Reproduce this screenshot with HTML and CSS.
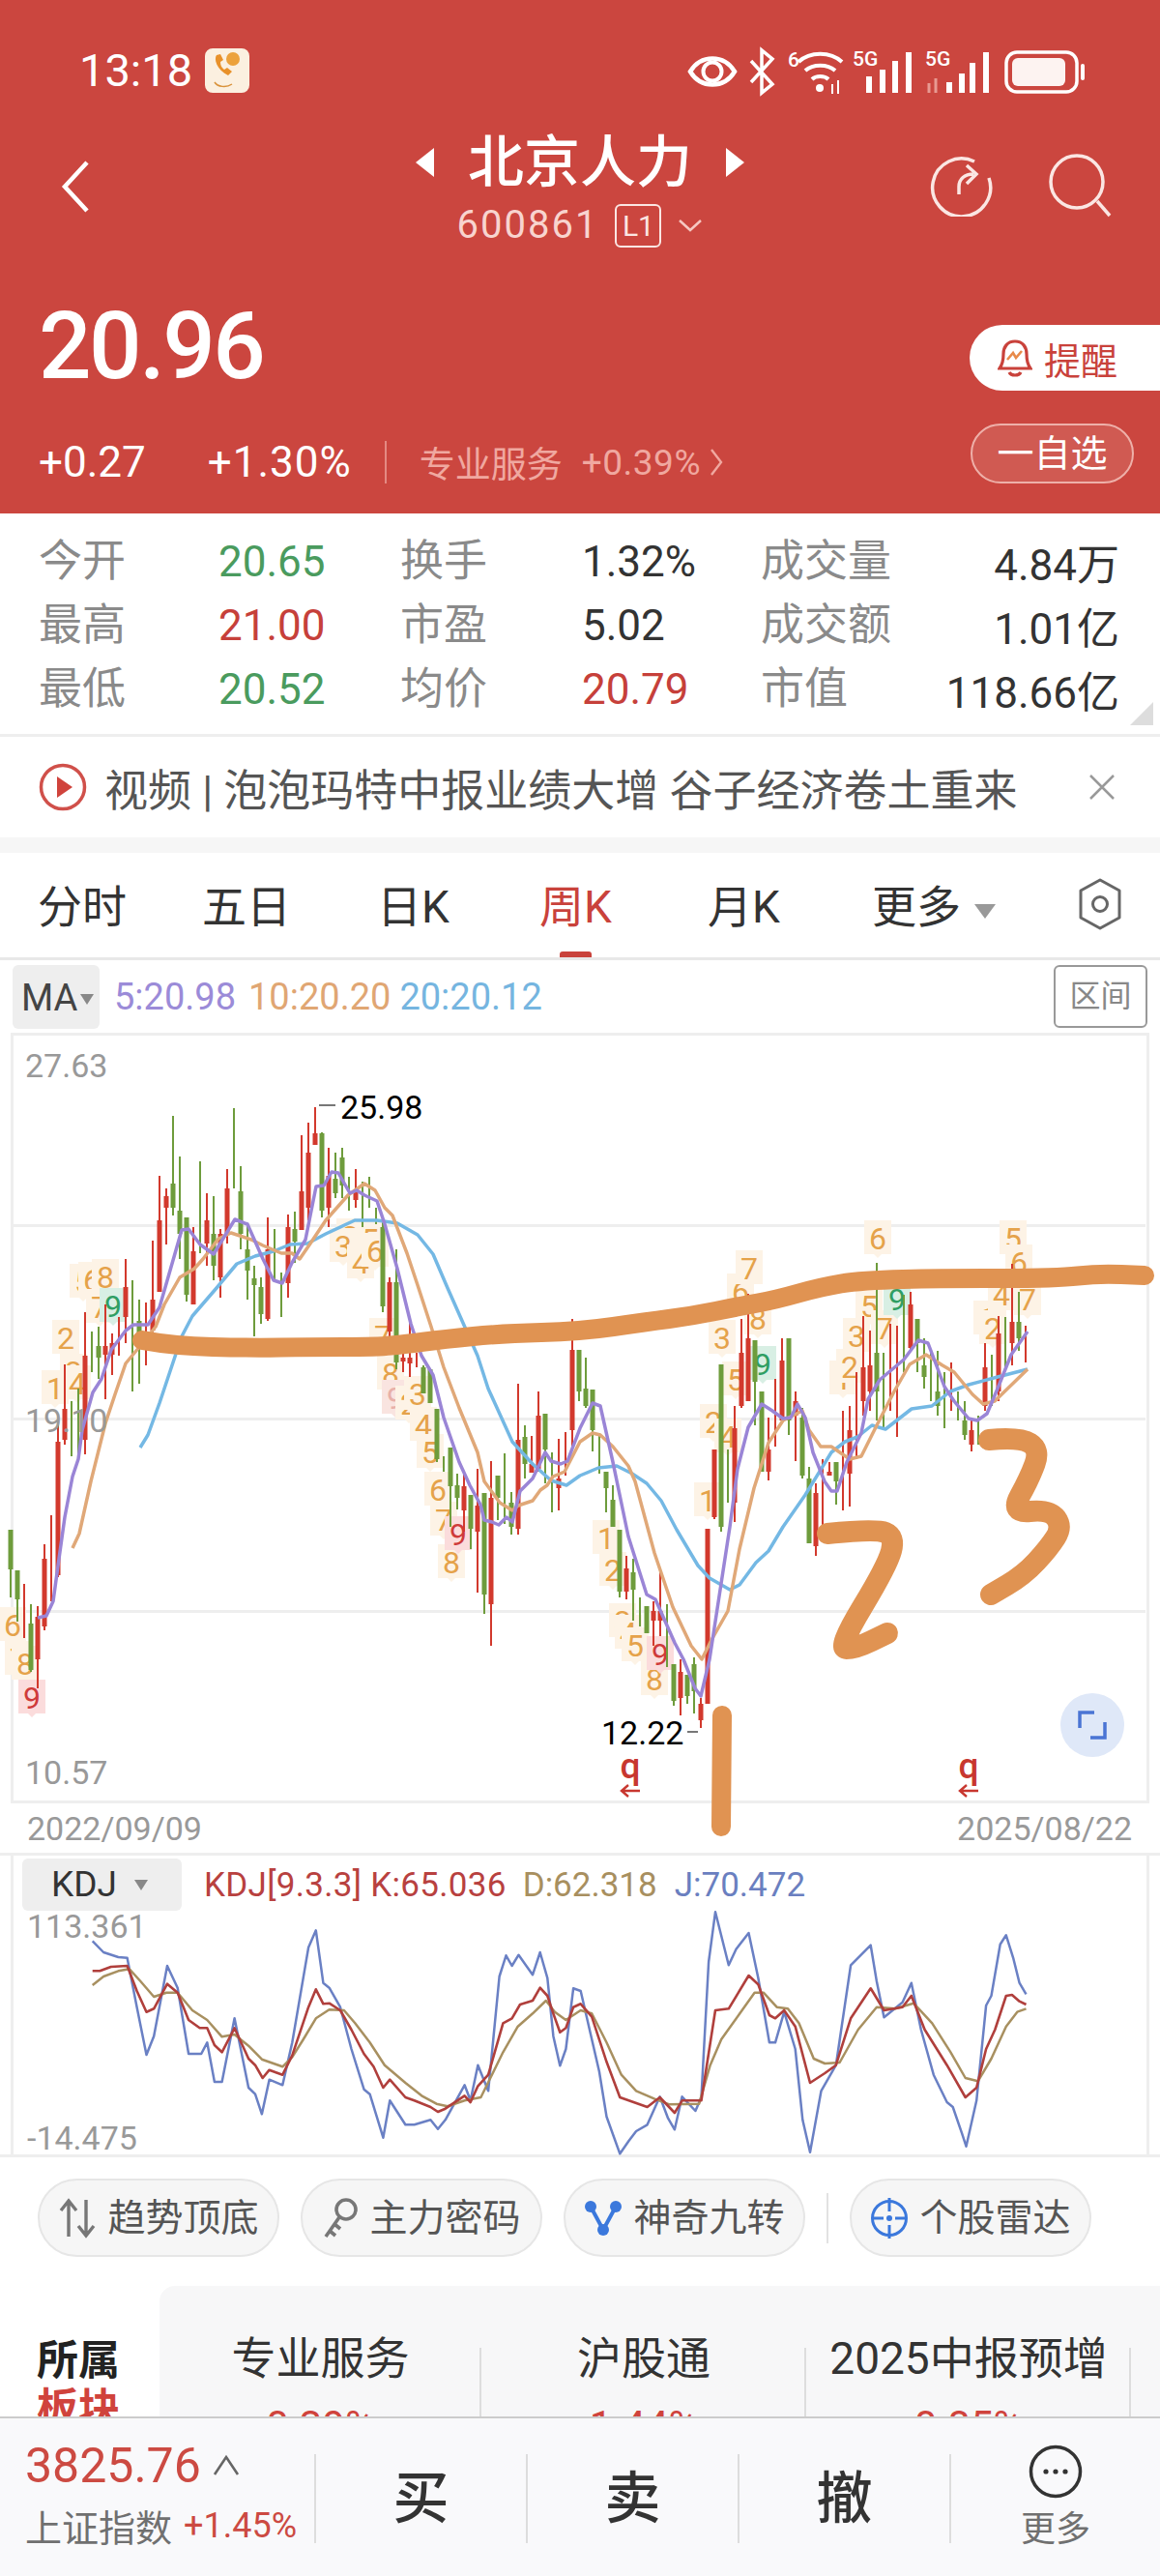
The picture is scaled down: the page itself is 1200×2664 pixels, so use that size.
FILE: index.html
```html
<!DOCTYPE html>
<html lang="zh-CN">
<head>
    <meta charset="UTF-8">
    <meta name="viewport" content="width=device-width, initial-scale=1.0">
    <title>北京人力 600861</title>
    <link rel="stylesheet" href="styles.css">
</head>
<body>
    <div class="page">
        <div class="main">
            <header class="header">
                <div class="status-bar">
                    <div class="status-left">
                        <span class="clock">13:18</span>
                        <svg class="app-badge" width="46" height="46" viewBox="0 0 46 46">
                            <rect width="46" height="46" rx="8" fill="#fbf0e0"/>
                            <circle cx="29" cy="11" r="7" fill="#eca23c"/>
                            <path d="M12 7c-3 4 0 15 12 21l4-4-5-4-3 2c-3-2-4-5-4-8l3-2-3-6z" fill="#e8912a"/>
                            <path d="M10 35c3 5 12 6 18 2" fill="none" stroke="#d9923a" stroke-width="1.5"/>
                        </svg>
                    </div>
                    <svg class="status-icons" width="425" height="60" viewBox="0 0 425 60">
                        <path d="M9 31c11-18 35-18 46 0-11 18-35 18-46 0z" fill="none" stroke="#fff" stroke-width="4.5"/>
                        <circle cx="32" cy="31" r="9.5" fill="none" stroke="#fff" stroke-width="4"/>
                        <path d="M72 20l22 24-11 9V9l11 9-22 24" fill="none" stroke="#fff" stroke-width="3.5"/>
                        <text x="110" y="26" class="status-tiny">6</text>
                        <path d="M121 21c12-11 33-11 45 0M128 30c8-7 23-7 31 0M135 39c4-4 13-4 17 0" fill="none" stroke="#fff" stroke-width="4"/>
                        <circle cx="143" cy="48" r="4" fill="#fff"/>
                        <path d="M156 44v10M162 40v14" stroke="#fff" stroke-width="2"/>
                        <text x="177" y="25" class="status-tiny">5G</text>
                        <path d="M194 53V36M208 53V29M221 53V20M235 53V11" stroke="#fff" stroke-width="6"/>
                        <text x="252" y="25" class="status-tiny">5G</text>
                        <path d="M256 53V43M263 53V38" stroke="#e89a92" stroke-width="3"/>
                        <path d="M277 53V42M290 53V33M301 53V22M315 53V11" stroke="#fff" stroke-width="6"/>
                        <rect x="336" y="11" width="73" height="41" rx="11" fill="none" stroke="#fff" stroke-width="3.5"/>
                        <rect x="342" y="17" width="55" height="29" rx="6" fill="#fdf3f1"/>
                        <path d="M415 25v13" stroke="#fff" stroke-width="4" stroke-linecap="round"/>
                    </svg>
                </div>

                <div class="title-row">
                    <svg class="back-icon" width="32" height="56" viewBox="0 0 32 56">
                        <path d="M28 3L5 28l23 25" fill="none" stroke="#fff" stroke-width="4.5"/>
                    </svg>
                    <div class="title-center">
                        <div class="stock-name">
                            <span class="arrow-left"></span>
                            <span>北京人力</span>
                            <span class="arrow-right"></span>
                        </div>
                        <div class="stock-code">
                            <span>600861</span>
                            <span class="level-box">L1</span>
                            <svg width="26" height="14" viewBox="0 0 26 14">
                                <path d="M2 2l11 10L24 2" fill="none" stroke="#f6c8c2" stroke-width="2.5"/>
                            </svg>
                        </div>
                    </div>
                    <div class="title-actions">
                        <svg width="66" height="66" viewBox="0 0 66 66">
                            <path d="M47 9A30 30 0 1 0 62 26" fill="none" stroke="#fbe6e3" stroke-width="3.5"/>
                            <path d="M31 43V35c0-8 6-13 15-13M39 13l10 9-10 10" fill="none" stroke="#fbe6e3" stroke-width="3.5"/>
                        </svg>
                        <svg width="70" height="70" viewBox="0 0 70 70">
                            <circle cx="30" cy="30" r="27" fill="none" stroke="#fbe6e3" stroke-width="3.5"/>
                            <path d="M51 50l13 15" stroke="#fbe6e3" stroke-width="3.5"/>
                        </svg>
                    </div>
                </div>

                <div class="price-row">
                    <span class="price">20.96</span>
                    <div class="remind-btn">
                        <svg width="36" height="40" viewBox="0 0 36 40">
                            <path d="M18 3c-8 0-12 6-12 13 0 7-1 11-4 15h32c-3-4-4-8-4-15 0-7-4-13-12-13zM12 35c2 4 10 4 12 0" fill="none" stroke="#c9423b" stroke-width="3.2"/>
                            <path d="M10 22l6-7 3 5 6-7" fill="none" stroke="#e88a4a" stroke-width="2.6"/>
                        </svg>
                        <span>提醒</span>
                    </div>
                </div>

                <div class="change-row">
                    <div class="change-left">
                        <span class="change-abs">+0.27</span>
                        <span class="change-pct">+1.30%</span>
                        <span class="change-sep"></span>
                        <span class="sector-name">专业服务</span>
                        <span class="sector-pct">+0.39%</span>
                        <svg width="16" height="32" viewBox="0 0 16 32">
                            <path d="M3 3l10 13L3 29" fill="none" stroke="#f0a8a0" stroke-width="2.4"/>
                        </svg>
                    </div>
                    <div class="watch-btn">一自选</div>
                </div>
            </header>

            <section class="stats">
                <span class="stat-label">今开</span><span class="stat-value green">20.65</span>
                <span class="stat-label">换手</span><span class="stat-value">1.32%</span>
                <span class="stat-label">成交量</span><span class="stat-value right">4.84万</span>

                <span class="stat-label">最高</span><span class="stat-value red">21.00</span>
                <span class="stat-label">市盈</span><span class="stat-value">5.02</span>
                <span class="stat-label">成交额</span><span class="stat-value right">1.01亿</span>

                <span class="stat-label">最低</span><span class="stat-value green">20.52</span>
                <span class="stat-label">均价</span><span class="stat-value red">20.79</span>
                <span class="stat-label">市值</span><span class="stat-value right">118.66亿</span>
                <span class="stats-corner"></span>
            </section>

            <section class="news">
                <svg width="50" height="50" viewBox="0 0 50 50">
                    <circle cx="25" cy="25" r="22.5" fill="none" stroke="#d0504a" stroke-width="3.5"/>
                    <path d="M19 14l16 11-16 11z" fill="#d0433c"/>
                </svg>
                <span class="news-text">视频 | 泡泡玛特中报业绩大增 谷子经济卷土重来</span>
                <svg class="news-close" width="30" height="30" viewBox="0 0 30 30">
                    <path d="M3 3l24 24M27 3L3 27" stroke="#999" stroke-width="2.5"/>
                </svg>
            </section>

            <div class="strip"></div>

            <nav class="tabs">
                <span class="tab">分时</span>
                <span class="tab">五日</span>
                <span class="tab">日K</span>
                <span class="tab active">周K</span>
                <span class="tab">月K</span>
                <span class="tab tab-more">更多<i class="more-caret"></i></span>
                <svg class="tab-gear" width="46" height="56" viewBox="0 0 46 56">
                    <path d="M23 3l20 11v28L23 53 3 42V14z" fill="none" stroke="#666" stroke-width="3" stroke-linejoin="round"/>
                    <circle cx="23" cy="28" r="7.5" fill="none" stroke="#666" stroke-width="3"/>
                </svg>
            </nav>

            <div class="ma-row">
                <div class="ma-btn">MA<i class="mini-caret"></i></div>
                <span class="ma5">5:20.98</span>
                <span class="ma10">10:20.20</span>
                <span class="ma20">20:20.12</span>
                <span class="range-btn">区间</span>
            </div>

            <section class="kline">
                <div class="kline-frame"></div>
                <div class="kline-dates">
                    <span>2022/09/09</span>
                    <span>2025/08/22</span>
                </div>
                <!-- candles, averages and pen strokes are drawn here by chart.js -->
                <svg id="klineChart" class="kline-svg" viewBox="0 1069 1200 848"></svg>
                <div class="expand-btn">
                    <svg width="32" height="32" viewBox="0 0 32 32">
                        <path d="M18 3H3v16M14 29h15V13" fill="none" stroke="#4a74d4" stroke-width="3.5"/>
                    </svg>
                </div>
            </section>

            <section class="kdj">
                <div class="kdj-head">
                    <div class="kdj-btn">KDJ<i class="mini-caret"></i></div>
                    <span class="kdj-k">KDJ[9.3.3] K:65.036</span>
                    <span class="kdj-d">D:62.318</span>
                    <span class="kdj-j">J:70.472</span>
                </div>
                <svg id="kdjChart" class="kdj-svg" viewBox="0 1917 1200 315"></svg>
            </section>

            <div class="tools">
                <div class="tool-pill">
                    <svg width="40" height="46" viewBox="0 0 40 46">
                        <path d="M11 42V6M3 15l8-10 8 10M29 4v36M21 31l8 10 8-10" fill="none" stroke="#777" stroke-width="3.4"/>
                    </svg>
                    <span>趋势顶底</span>
                </div>
                <div class="tool-pill">
                    <svg width="38" height="46" viewBox="0 0 38 46">
                        <circle cx="25" cy="14" r="10" fill="none" stroke="#777" stroke-width="3.6"/>
                        <path d="M18 22L4 42M8 36l6 5M13 29l6 5" fill="none" stroke="#777" stroke-width="3.6"/>
                    </svg>
                    <span>主力密码</span>
                </div>
                <div class="tool-pill">
                    <svg width="40" height="46" viewBox="0 0 40 46">
                        <path d="M7 11l13 24 13-24" fill="none" stroke="#3b78dc" stroke-width="4"/>
                        <circle cx="7" cy="11" r="6" fill="#3b78dc"/>
                        <circle cx="33" cy="11" r="6" fill="#3b78dc"/>
                        <circle cx="20" cy="35" r="6" fill="#3b78dc"/>
                    </svg>
                    <span>神奇九转</span>
                </div>
                <span class="tool-sep"></span>
                <div class="tool-pill">
                    <svg width="40" height="50" viewBox="0 0 40 50">
                        <circle cx="20" cy="25" r="17.5" fill="none" stroke="#3b78dc" stroke-width="3"/>
                        <path d="M20 4v14M20 32v14M2 25h12M26 25h12" stroke="#3b78dc" stroke-width="3"/>
                        <circle cx="20" cy="25" r="3" fill="#3b78dc"/>
                    </svg>
                    <span>个股雷达</span>
                </div>
            </div>

            <section class="sectors">
                <div class="sector-side">
                    <span class="side-title">所属</span>
                    <span class="side-sub">板块</span>
                </div>
                <div class="sector-panel">
                    <div class="sector-cell"><span class="cell-name">专业服务</span><span class="cell-pct">0.39%</span></div>
                    <div class="sector-cell"><span class="cell-name">沪股通</span><span class="cell-pct">1.44%</span></div>
                    <div class="sector-cell"><span class="cell-name">2025中报预增</span><span class="cell-pct">0.85%</span></div>
                </div>
            </section>
        </div>

        <footer class="bottom-bar">
            <div class="index-box">
                <div class="index-top">
                    <span class="index-value">3825.76</span>
                    <svg width="28" height="26" viewBox="0 0 28 26">
                        <path d="M2 22L14 4l12 18" fill="none" stroke="#666" stroke-width="2.6"/>
                    </svg>
                </div>
                <div class="index-bottom">
                    <span class="index-name">上证指数</span>
                    <span class="index-pct">+1.45%</span>
                </div>
            </div>
            <div class="trade-btn">买</div>
            <div class="trade-btn">卖</div>
            <div class="trade-btn">撤</div>
            <div class="more-btn">
                <svg width="56" height="56" viewBox="0 0 56 56">
                    <circle cx="28" cy="28" r="25.5" fill="none" stroke="#333" stroke-width="3.5"/>
                    <circle cx="18" cy="28" r="2.6" fill="#333"/>
                    <circle cx="28" cy="28" r="2.6" fill="#333"/>
                    <circle cx="38" cy="28" r="2.6" fill="#333"/>
                </svg>
                <span>更多</span>
            </div>
        </footer>
    </div>

    <script src="chart.js"></script>
</body>
</html>
```

FILE: styles.css
```css
* {
    box-sizing: border-box;
}
body {
    margin: 0;
    font-family: Roboto, "Noto Sans CJK SC", sans-serif;
    background: #fff;
    color: #333;
}
.page {
    width: 1200px;
    height: 2664px;
    display: flex;
    flex-direction: column;
    overflow: hidden;
}
.main {
    flex: 1;
    min-height: 0;
    overflow: hidden;
}

/* red quote header */
.header {
    height: 531px;
    background: #cb463f;
    color: #fff;
}
.status-bar {
    height: 145px;
    display: flex;
    justify-content: space-between;
    align-items: center;
    padding: 0 70px 0 82px;
}
.status-left {
    display: flex;
    align-items: center;
    gap: 13px;
}
.clock {
    font-size: 47px;
}
.status-tiny {
    font-family: Roboto, sans-serif;
    font-size: 21px;
    font-weight: 500;
    fill: #fff;
}
.title-row {
    height: 125px;
    display: grid;
    grid-template-columns: 1fr auto 1fr;
    align-items: start;
    padding: 0 46px 0 46px;
}
.back-icon {
    margin: 20px 0 0 16px;
}
.title-center {
    display: flex;
    flex-direction: column;
    align-items: center;
}
.stock-name {
    display: flex;
    align-items: center;
    gap: 35px;
    font-size: 58px;
    line-height: 46px;
    font-weight: 500;
}
.arrow-left, .arrow-right {
    width: 0;
    height: 0;
    border-top: 15px solid transparent;
    border-bottom: 15px solid transparent;
}
.arrow-left {
    border-right: 19px solid #fff;
}
.arrow-right {
    border-left: 19px solid #fff;
}
.stock-code {
    display: flex;
    align-items: center;
    gap: 17px;
    margin-top: 19px;
    font-size: 40px;
    line-height: 46px;
    color: #f8d4cf;
    letter-spacing: 2px;
}
.level-box {
    width: 48px;
    height: 45px;
    line-height: 41px;
    border: 2px solid #fbe6e3;
    border-radius: 6px;
    font-size: 30px;
    text-align: center;
    color: #fbe6e3;
    letter-spacing: 0;
}
.title-actions {
    display: flex;
    justify-content: flex-end;
    align-items: flex-start;
    gap: 57px;
    padding-top: 13px;
}
.price-row {
    height: 168px;
    display: flex;
    justify-content: space-between;
    align-items: flex-start;
    padding-left: 40px;
}
.price {
    font-size: 96px;
    line-height: 176px;
    font-weight: 500;
    letter-spacing: -2.5px;
}
.remind-btn {
    width: 197px;
    height: 68px;
    margin-top: 66px;
    display: flex;
    align-items: center;
    gap: 12px;
    padding-left: 29px;
    background: #fff;
    border-radius: 34px 0 0 34px;
    color: #c9423b;
    font-size: 38px;
}
.change-row {
    height: 62px;
    display: flex;
    justify-content: space-between;
    padding: 0 27px 0 40px;
}
.change-left {
    display: flex;
    align-items: center;
    height: 80px;
}
.change-abs, .change-pct {
    font-size: 44px;
}
.change-pct {
    margin-left: 64px;
    letter-spacing: 1px;
}
.change-sep {
    width: 2px;
    height: 44px;
    margin: 0 34px;
    background: #e48a83;
}
.sector-name {
    font-size: 37px;
    color: #f0a8a0;
}
.sector-pct {
    font-size: 37px;
    color: #f0a8a0;
    margin: 0 8px 0 20px;
    letter-spacing: 0.5px;
}
.watch-btn {
    width: 169px;
    height: 62px;
    line-height: 58px;
    text-align: center;
    background: #d05a52;
    border: 2px solid #eeb0a9;
    border-radius: 31px;
    font-size: 38px;
}

/* quote table */
.stats {
    position: relative;
    height: 231px;
    display: grid;
    grid-template-columns: 186px 188px 188px 185px 1fr auto;
    grid-auto-rows: 66px;
    align-items: center;
    padding: 17px 42px 0 40px;
    border-bottom: 3px solid #eee;
}
.stat-label {
    font-size: 45px;
    line-height: 60px;
    color: #8a8a8a;
}
.stat-value {
    font-size: 44px;
    color: #333;
}
.stat-value.right {
    grid-column: 6;
    text-align: right;
}
.stat-label:nth-child(6n+5) {
    grid-column: 5;
}
.green {
    color: #4a9b5e;
}
.red {
    color: #c6403a;
}
.stats-corner {
    position: absolute;
    right: 7px;
    bottom: 9px;
    width: 0;
    height: 0;
    border-left: 24px solid transparent;
    border-bottom: 24px solid #ddd;
}

.news {
    height: 104px;
    display: flex;
    align-items: center;
    padding: 0 45px 0 40px;
}
.news-text {
    flex: 1;
    margin-left: 18px;
    font-size: 45px;
    color: #555;
    white-space: nowrap;
}
.strip {
    height: 16px;
    background: #f6f6f6;
}

/* period tabs */
.tabs {
    height: 111px;
    display: grid;
    grid-template-columns: 170px 181px 168px 174px 170px 1fr auto;
    align-items: center;
    padding: 0 39px 0 39px;
    border-bottom: 3px solid #e8e8e8;
}
.tab {
    position: relative;
    font-size: 46px;
    line-height: 108px;
    height: 108px;
    padding-top: 2px;
    color: #333;
}
.tab.active {
    color: #c9423b;
}
.tab.active::after {
    content: "";
    position: absolute;
    left: 21px;
    bottom: 0;
    width: 33px;
    height: 6px;
    background: #c9423b;
    border-radius: 3px 3px 0 0;
}
.more-caret {
    display: inline-block;
    margin-left: 14px;
    vertical-align: 4px;
    border-left: 11px solid transparent;
    border-right: 11px solid transparent;
    border-top: 15px solid #999;
}
.tab-gear {
    margin-bottom: 2px;
}

/* averages row */
.ma-row {
    height: 75px;
    display: flex;
    align-items: center;
    padding: 0 13px 0 13px;
    font-size: 38px;
}
.ma-btn {
    width: 90px;
    height: 66px;
    line-height: 68px;
    padding-left: 9px;
    background: #eee;
    border-radius: 6px;
    color: #444;
    font-size: 38px;
    white-space: nowrap;
}
.mini-caret {
    display: inline-block;
    margin-left: 3px;
    vertical-align: 6px;
    border-left: 7px solid transparent;
    border-right: 7px solid transparent;
    border-top: 11px solid #888;
}
.ma5 {
    margin-left: 15px;
    color: #9b8bd8;
}
.ma10 {
    margin-left: 13px;
    color: #e0a673;
}
.ma20 {
    margin-left: 9px;
    color: #75b5e0;
}
.range-btn {
    margin-left: auto;
    width: 97px;
    height: 65px;
    line-height: 61px;
    text-align: center;
    border: 2px solid #999;
    border-radius: 6px;
    font-size: 32px;
    color: #888;
}

/* k-line pane */
.kline {
    position: relative;
    height: 848px;
}
.kline-frame {
    height: 797px;
    margin: 0 11px;
    border: 3px solid #eee;
}
.kline-dates {
    height: 51px;
    display: flex;
    justify-content: space-between;
    align-items: center;
    padding: 0 29px 0 28px;
    font-size: 34px;
    color: #999;
}
.kline-svg, .kdj-svg {
    position: absolute;
    left: 0;
    top: 0;
    width: 1200px;
}
.kline-svg {
    height: 848px;
}
.axis-label {
    font-family: Roboto, sans-serif;
    font-size: 34px;
    fill: #999;
}
.price-mark {
    font-family: Roboto, sans-serif;
    font-size: 34px;
    fill: #000;
}
.badge-text {
    font-family: Roboto, sans-serif;
    font-size: 32px;
    text-anchor: middle;
}
.nine-mark {
    font-family: Roboto, sans-serif;
    font-size: 37px;
    font-weight: 500;
    fill: #c8372f;
    text-anchor: middle;
}
.expand-btn {
    position: absolute;
    left: 1097px;
    top: 683px;
    width: 66px;
    height: 66px;
    display: flex;
    align-items: center;
    justify-content: center;
    border-radius: 50%;
    background: #dfe8f8;
}

/* kdj pane */
.kdj {
    position: relative;
    height: 315px;
    border-top: 3px solid #eee;
    border-bottom: 3px solid #eee;
}
.kdj::before {
    content: "";
    position: absolute;
    left: 11px;
    right: 11px;
    top: 0;
    bottom: 0;
    border-left: 3px solid #eee;
    border-right: 3px solid #eee;
}
.kdj-head {
    position: relative;
    z-index: 1;
    display: flex;
    align-items: center;
    height: 54px;
    margin-top: 3px;
    padding-left: 23px;
    font-size: 35px;
}
.kdj-btn {
    width: 165px;
    height: 54px;
    line-height: 54px;
    padding-left: 30px;
    margin-right: 23px;
    background: #eee;
    border-radius: 6px;
    color: #333;
    font-size: 37px;
    white-space: nowrap;
}
.kdj-btn .mini-caret {
    margin-left: 18px;
}
.kdj-k {
    color: #b8413f;
    letter-spacing: 0.3px;
}
.kdj-d {
    margin-left: 17px;
    color: #a88f5f;
}
.kdj-j {
    margin-left: 18px;
    color: #6a7fc0;
}
.kdj-svg {
    top: -3px;
    height: 315px;
}

/* tool pills */
.tools {
    height: 133px;
    display: flex;
    align-items: flex-start;
    gap: 22px;
    padding: 22px 0 0 39px;
}
.tool-pill {
    width: 250px;
    height: 81px;
    display: flex;
    align-items: center;
    justify-content: center;
    gap: 11px;
    background: #f6f6f6;
    border: 2px solid #e6e6e6;
    border-radius: 41px;
    font-size: 39px;
    line-height: 76px;
    color: #555;
}
.tool-sep {
    width: 2px;
    height: 52px;
    margin-top: 15px;
    background: #e2e2e2;
}

/* sector strip, cut off by the bottom bar */
.sectors {
    display: flex;
    height: 200px;
}
.sector-side {
    width: 165px;
    display: flex;
    flex-direction: column;
    padding: 52px 0 0 38px;
    font-size: 43px;
    font-weight: 700;
    line-height: 50px;
}
.side-title {
    color: #222;
}
.side-sub {
    color: #d0433c;
}
.sector-panel {
    flex: 1;
    display: flex;
    background: #f7f7f8;
    border-radius: 16px 0 0 0;
    padding-top: 50px;
}
.sector-cell {
    position: relative;
    width: 336px;
    height: 160px;
    display: flex;
    flex-direction: column;
    align-items: center;
}
.sector-cell::after {
    content: "";
    position: absolute;
    right: 0;
    top: 14px;
    bottom: 0;
    width: 2px;
    background: #ddd;
}
.sector-cell:first-child {
    width: 333px;
}
.cell-name {
    font-size: 46px;
    line-height: 50px;
    color: #333;
    white-space: nowrap;
}
.cell-pct {
    margin-top: 20px;
    font-size: 42px;
    color: #d0433c;
}

/* bottom trade bar */
.bottom-bar {
    position: relative;
    height: 165px;
    flex-shrink: 0;
    display: flex;
    align-items: flex-start;
    padding-top: 37px;
    background: #f9f9fb;
    border-top: 2px solid #ccc;
}
.index-box {
    width: 327px;
    height: 92px;
    padding-left: 26px;
    border-right: 2px solid #ddd;
}
.index-top {
    display: flex;
    align-items: center;
    gap: 12px;
    height: 44px;
    margin-top: -10px;
}
.index-value {
    font-size: 50px;
    color: #cc4a42;
}
.index-bottom {
    display: flex;
    align-items: center;
    gap: 12px;
    margin-top: 12px;
}
.index-name {
    font-size: 38px;
    color: #707070;
}
.index-pct {
    font-size: 36px;
    color: #cc4a42;
}
.trade-btn {
    width: 219px;
    height: 92px;
    line-height: 92px;
    text-align: center;
    border-right: 2px solid #ddd;
    font-size: 58px;
    font-weight: 500;
    color: #333;
}
.more-btn {
    flex: 1;
    display: flex;
    flex-direction: column;
    align-items: center;
    margin-top: -10px;
    gap: 10px;
    font-size: 36px;
    line-height: 44px;
    color: #707070;
}
```

FILE: chart.js
```js
// weekly bars: colour, high, low, then body top and bottom when the body is visible
const bars = [
    'g 1583 1653 1583 1624', 'g 1625 1678 1625 1655', 'r 1639 1695', 'g 1660 1730 1680 1728', 'r 1662 1747 1673 1717',
    'r 1598 1687 1613 1683', 'r 1568 1657', 'r 1470 1632 1492 1630', 'r 1412 1495 1458 1490', 'g 1450 1507',
    'g 1437 1512', 'r 1358 1505 1403 1490', 'g 1378 1420', 'g 1373 1427 1393 1405', 'r 1350 1448 1393 1402',
    'r 1380 1423 1390 1402', 'r 1363 1403', 'r 1303 1390 1332 1363', 'g 1325 1440', 'g 1345 1432 1367 1380',
    'r 1348 1413', 'r 1284 1380 1345 1377', 'r 1217 1337 1263 1337', 'r 1230 1288 1238 1250', 'g 1155 1258 1225 1250',
    'g 1197 1303 1253 1277', 'g 1260 1347 1260 1340', 'r 1270 1350 1295 1350', 'g 1202 1297', 'r 1235 1310 1263 1287',
    'g 1238 1325 1277 1310', 'r 1272 1343 1277 1322', 'r 1210 1287 1230 1277', 'g 1147 1230', 'g 1207 1293 1233 1277',
    'g 1267 1345 1293 1315', 'g 1310 1383 1323 1330', 'g 1322 1370 1332 1360', 'r 1260 1367 1293 1365', 'g 1272 1327',
    'g 1317 1363', 'r 1257 1343 1270 1328', 'g 1254 1307 1272 1285', 'r 1175 1273 1233 1273', 'r 1162 1263 1193 1250',
    'r 1146 1185 1173 1185', 'g 1172 1260 1173 1253', 'r 1188 1270 1217 1250', 'g 1193 1240 1220 1235', 'g 1188 1240 1198 1227',
    'g 1218 1253', 'r 1210 1250 1232 1242', 'g 1223 1270', 'g 1218 1250', 'g 1250 1267',
    'g 1263 1358 1270 1352', 'r 1322 1383 1327 1378', 'g 1293 1417 1327 1410', 'r 1397 1420 1405 1409', 'r 1365 1425 1405 1411',
    'r 1400 1415', 'g 1413 1442 1415 1442', 'g 1417 1452 1417 1452', 'g 1458 1513 1458 1510', 'g 1507 1523',
    'g 1498 1580 1498 1538', 'g 1525 1562 1537 1550', 'r 1523 1585 1538 1563', 'g 1547 1603 1547 1582', 'r 1520 1648 1558 1585',
    'g 1545 1670 1545 1650', 'r 1512 1703 1550 1660', 'g 1527 1573 1527 1550', 'g 1504 1577', 'g 1544 1588 1555 1580',
    'r 1432 1588 1490 1582', 'g 1475 1530 1487 1515', 'r 1486 1524 1515 1524', 'r 1440 1523 1465 1520', 'g 1463 1535 1463 1500',
    'g 1503 1565', 'r 1489 1563 1530 1540', 'r 1482 1527', 'r 1365 1497 1397 1480', 'g 1397 1450 1397 1440',
    'g 1405 1457 1437 1455', 'g 1438 1502 1438 1480', 'g 1483 1525', 'g 1523 1565 1523 1540', 'g 1537 1580 1552 1580',
    'g 1583 1653 1583 1647', 'r 1610 1655 1623 1647', 'g 1613 1677 1627 1645', 'g 1653 1683', 'g 1662 1690 1662 1690',
    'r 1657 1703 1667 1677', 'r 1627 1693 1667 1677', 'g 1660 1725', 'g 1722 1765 1722 1760', 'r 1717 1775 1730 1757',
    'g 1733 1763 1733 1755', 'g 1715 1773 1722 1750', 'r 1757 1788 1763 1780', 'r 1582 1763 1582 1763', 'r 1500 1572 1500 1570',
    'g 1412 1585 1412 1580', 'g 1500 1555', 'r 1455 1575 1478 1555', 'r 1365 1457 1400 1455', 'r 1339 1447 1385 1450',
    'g 1387 1475 1387 1430', 'g 1440 1523 1440 1523', 'r 1467 1532 1500 1523', 'r 1427 1497', 'r 1385 1473 1408 1470',
    'g 1385 1485 1385 1470', 'r 1440 1512 1450 1465', 'g 1457 1530 1467 1527', 'g 1518 1597 1530 1597', 'r 1535 1610 1545 1600',
    'r 1510 1582', 'r 1513 1527 1523 1527', 'g 1513 1557 1513 1533', 'r 1460 1563', 'r 1455 1559 1480 1525',
    'r 1420 1510', 'r 1362 1465 1415 1450', 'r 1377 1460 1413 1440', 'g 1307 1470 1400 1440', 'g 1400 1480',
    'r 1370 1460', 'r 1372 1487', 'g 1340 1420', 'r 1337 1397 1350 1395', 'g 1365 1420 1365 1390',
    'g 1385 1437 1413 1425', 'g 1400 1450', 'g 1398 1465 1440 1455', 'g 1420 1478', 'r 1410 1460',
    'g 1440 1470', 'g 1450 1490 1470 1485', 'r 1470 1502 1480 1495', 'g 1465 1495', 'r 1390 1460 1415 1455',
    'g 1402 1455', 'r 1362 1450 1380 1440', 'g 1363 1415', 'r 1308 1413 1368 1390', 'g 1337 1398 1368 1385',
    'r 1372 1410'
];

const ma5 = [[39,1674],[48,1672],[55,1657],[61,1613],[67,1570],[75,1528],[81,1510],[85,1480],[96,1441],[105,1427],[115,1397],[130,1377],[138,1371],[153,1371],[165,1353],[188,1273],[195,1272],[207,1288],[221,1298],[243,1262],[256,1267],[272,1303],[283,1325],[292,1328],[302,1307],[316,1283],[327,1228],[335,1227],[343,1213],[350,1214],[362,1235],[369,1232],[377,1237],[390,1243],[398,1267],[411,1313],[425,1370],[436,1403],[448,1423],[459,1467],[475,1513],[486,1537],[497,1557],[501,1573],[509,1575],[516,1578],[524,1570],[530,1575],[538,1543],[551,1530],[564,1503],[570,1512],[580,1515],[587,1512],[600,1478],[613,1452],[621,1455],[634,1513],[650,1590],[669,1650],[678,1655],[698,1700],[707,1717],[719,1747],[725,1755],[734,1717],[755,1580],[763,1520],[774,1477],[788,1453],[799,1460],[810,1468],[818,1467],[825,1453],[833,1467],[841,1503],[853,1533],[860,1543],[866,1543],[876,1513],[891,1483],[898,1448],[910,1428],[935,1407],[950,1387],[960,1390],[977,1435],[987,1450],[1002,1468],[1011,1470],[1021,1463],[1032,1437],[1046,1402],[1063,1378]];

const ma10 = [[75,1602],[82,1587],[94,1533],[109,1473],[119,1443],[130,1411],[145,1393],[161,1373],[170,1350],[186,1322],[201,1313],[210,1303],[226,1282],[239,1276],[260,1283],[272,1289],[291,1297],[302,1297],[310,1303],[321,1287],[337,1263],[360,1237],[377,1225],[388,1232],[398,1250],[406,1258],[421,1297],[432,1330],[446,1373],[459,1415],[475,1457],[494,1503],[501,1533],[517,1555],[530,1563],[536,1558],[551,1553],[559,1542],[566,1537],[572,1528],[584,1523],[600,1492],[613,1483],[621,1485],[634,1497],[650,1517],[657,1533],[677,1607],[696,1663],[715,1703],[726,1717],[736,1697],[753,1667],[765,1603],[780,1540],[795,1493],[810,1470],[830,1460],[837,1480],[849,1497],[860,1497],[879,1510],[891,1507],[906,1477],[925,1440],[941,1412],[958,1402],[975,1413],[987,1420],[1006,1443],[1017,1453],[1029,1450],[1063,1417]];

const ma20 = [[145,1498],[153,1485],[165,1452],[188,1383],[199,1362],[224,1333],[245,1308],[264,1300],[283,1295],[300,1288],[318,1287],[337,1277],[367,1263],[390,1263],[411,1266],[432,1278],[448,1298],[463,1333],[494,1403],[505,1437],[530,1492],[551,1515],[570,1532],[586,1537],[600,1527],[619,1519],[638,1517],[654,1525],[669,1535],[684,1553],[700,1583],[722,1620],[734,1633],[755,1645],[765,1640],[782,1617],[795,1605],[810,1580],[833,1547],[860,1503],[874,1492],[887,1487],[902,1475],[916,1479],[943,1458],[964,1455],[983,1440],[1002,1433],[1032,1425],[1063,1417]];

// nine-turn counters: digit, centre x, centre y, tone
const badges = [
    [5,86,1327],[6,95,1325],[8,109,1322],[7,103,1353],[9,117,1352,'g'],[2,68,1385],[1,57,1437],[3,76,1420],[4,80,1432],
    [2,362,1280],[5,383,1283],[3,355,1290],[4,373,1307],[6,388,1295],[7,396,1383],[8,404,1422],[9,409,1447,'p'],[2,423,1453],
    [3,432,1443],[4,438,1475],[5,445,1503],[6,453,1542],[7,459,1573],[8,467,1617],[9,474,1588,'r'],
    [6,13,1682],[7,19,1717],[8,26,1722],[9,33,1757,'r'],
    [1,732,1553],[2,738,1472],[4,753,1487],[5,761,1428],[3,747,1385],[6,766,1337],[7,775,1313],[8,784,1365],[9,789,1412,'g'],
    [1,627,1592],[2,634,1625],[3,644,1678],[4,650,1690],[5,657,1703],[8,677,1738],[9,683,1712,'r'],
    [1,872,1427],[2,879,1415],[3,886,1383],[5,899,1352],[7,915,1375],[6,908,1282],[9,928,1345,'g'],
    [1,1021,1365],[2,1027,1375],[4,1036,1340],[5,1048,1282],[6,1054,1307],[7,1063,1345]
];

const penStrokes = [
    [[147,1387],[180,1393],[260,1395],[320,1394],[390,1394],[420,1391],[459,1386],[520,1380],[600,1378],[669,1368],[715,1362],[765,1352],[803,1345],[849,1332],[891,1325],[977,1323],[1094,1323],[1136,1318],[1184,1320]],
    [[747,1775],[746,1890]],
    [[856,1587],[906,1582],[926,1590],[918,1620],[866,1706],[885,1706],[918,1690]],
    [[1023,1490],[1055,1487],[1076,1500],[1065,1530],[1045,1566],[1086,1562],[1099,1580],[1085,1602],[1059,1630],[1025,1650]]
];

// kdj lines, kept in 1.3067 x-units and 3 y-units, converted when drawn
const kdjJ = [[125,385],[140,420],[160,435],[172,437],[185,590],[198,738],[208,680],[226,462],[240,530],[255,735],[272,735],[280,700],[290,822],[300,822],[317,625],[336,840],[345,860],[354,922],[364,815],[382,832],[395,700],[417,405],[427,352],[437,515],[445,530],[460,590],[475,720],[492,845],[500,860],[518,995],[527,880],[548,955],[560,955],[582,940],[592,968],[602,940],[628,832],[636,880],[646,770],[660,850],[675,495],[684,430],[692,462],[701,428],[720,490],[730,420],[740,500],[748,680],[757,772],[765,720],[775,532],[785,540],[810,790],[820,930],[838,1045],[850,1005],[860,975],[875,955],[892,868],[903,935],[912,970],[922,868],[940,912],[948,870],[958,450],[967,295],[985,460],[995,410],[1012,360],[1025,500],[1040,700],[1048,700],[1060,605],[1075,720],[1085,940],[1095,1040],[1110,850],[1130,770],[1150,460],[1177,398],[1185,510],[1195,622],[1220,575],[1232,515],[1245,660],[1262,800],[1280,885],[1288,900],[1300,980],[1306,1022],[1320,880],[1333,585],[1340,555],[1352,395],[1360,367],[1370,440],[1378,515],[1387,550]];
const kdjK = [[125,478],[135,478],[150,465],[172,462],[185,540],[198,605],[208,595],[226,518],[240,545],[255,630],[270,655],[280,655],[290,708],[300,730],[317,655],[336,750],[345,770],[355,810],[364,785],[382,800],[395,740],[417,590],[427,535],[437,580],[445,578],[460,600],[475,660],[492,735],[505,775],[518,840],[527,815],[548,870],[560,880],[582,900],[592,915],[602,905],[628,865],[636,885],[646,835],[660,800],[680,640],[692,625],[703,582],[720,570],[730,530],[740,555],[748,610],[757,668],[765,655],[775,590],[785,580],[800,620],[820,760],[838,870],[850,880],[875,900],[892,870],[912,918],[922,880],[948,880],[967,600],[985,595],[1012,492],[1025,520],[1040,615],[1048,625],[1060,600],[1075,650],[1095,825],[1115,795],[1130,770],[1150,625],[1177,532],[1195,600],[1220,590],[1232,555],[1250,660],[1280,770],[1305,870],[1320,840],[1333,720],[1345,660],[1360,555],[1368,552],[1378,572],[1387,582]];
const kdjD = [[125,522],[140,495],[160,478],[175,472],[190,510],[208,558],[225,545],[240,545],[260,600],[280,630],[300,682],[317,675],[336,710],[354,752],[382,775],[395,745],[410,690],[427,625],[445,598],[465,600],[480,640],[500,700],[520,770],[548,825],[570,865],[590,890],[605,898],[628,880],[650,870],[665,800],[680,730],[700,650],[720,610],[738,570],[750,605],[765,630],[785,600],[800,610],[820,700],[840,800],[860,850],[885,875],[905,892],[945,890],[960,770],[975,690],[1000,610],[1020,545],[1032,545],[1050,590],[1065,595],[1080,640],[1100,750],[1115,765],[1135,762],[1160,660],[1185,590],[1210,595],[1235,578],[1260,640],[1285,730],[1305,810],[1322,820],[1340,750],[1360,650],[1375,605],[1387,595]];

const BADGE_TONES = {
    o: { bg: '#fdf3e6', fg: '#e5a24a' },
    g: { bg: '#d8efe4', fg: '#2f9e63' },
    r: { bg: '#fbdcdc', fg: '#cf3a3a' },
    p: { bg: '#f9e4e0', fg: '#e8b0a8' }
};

function line(points, color, width) {
    const d = points.map(p => p.join(',')).join(' ');
    return `<polyline points="${d}" fill="none" stroke="${color}" stroke-width="${width}" stroke-linejoin="round"/>`;
}

// pen strokes get rounded through the midpoints of their segments
function smoothStroke(points, width) {
    let d = `M${points[0].join(' ')}`;
    for (let i = 1; i < points.length - 1; i++) {
        const midX = (points[i][0] + points[i + 1][0]) / 2;
        const midY = (points[i][1] + points[i + 1][1]) / 2;
        d += `Q${points[i].join(' ')} ${midX} ${midY}`;
    }
    d += `L${points[points.length - 1].join(' ')}`;
    return `<path d="${d}" fill="none" stroke="#e09352" stroke-width="${width}" stroke-linecap="round" stroke-linejoin="round"/>`;
}

function renderBadge([digit, x, y, tone = 'o']) {
    const t = BADGE_TONES[tone];
    return `<path d="M${x - 14} ${y - 19}h28v35h-10l-4 4-4-4h-10z" fill="${t.bg}"/>` +
        `<text class="badge-text" x="${x}" y="${y + 11}" fill="${t.fg}">${digit}</text>`;
}

function renderBar(row, i) {
    const [tone, high, low, top, bottom] = row.split(' ');
    const color = tone === 'r' ? '#d2392d' : '#6e9c3c';
    const x = 11 + i * 7;
    let out = `<rect x="${x - 1}" y="${high}" width="2" height="${low - high}" fill="${color}"/>`;
    if (top) out += `<rect x="${x - 2.5}" y="${top}" width="5" height="${bottom - top}" fill="${color}"/>`;
    return out;
}

function renderKline() {
    let html = '';
    [1268, 1468, 1667].forEach(y => {
        html += `<rect x="14" y="${y - 1}" width="1171" height="3" fill="#eee"/>`;
    });
    html += badges.map(renderBadge).join('');
    html += bars.map(renderBar).join('');
    html += line(ma20, '#74b8e4', 3.5);
    html += line(ma10, '#e0a878', 3.5);
    html += line(ma5, '#9a85d6', 3.5);

    html += '<text class="axis-label" x="26" y="1115">27.63</text>';
    html += '<text class="axis-label" x="26" y="1482">19.10</text>';
    html += '<text class="axis-label" x="26" y="1846">10.57</text>';

    html += '<path d="M330 1144h17M711 1792h11" stroke="#777" stroke-width="2"/>';
    html += '<text class="price-mark" x="352" y="1158">25.98</text>';
    html += '<text class="price-mark" x="622" y="1805">12.22</text>';

    [652, 1002].forEach(x => {
        html += `<text class="nine-mark" x="${x}" y="1840">q</text>`;
        html += `<path d="M${x + 10} 1853h-19M${x - 2} 1847l-7 6 7 6" fill="none" stroke="#c8372f" stroke-width="2.4"/>`;
    });

    html += smoothStroke(penStrokes[0], 20);
    html += smoothStroke(penStrokes[1], 20);
    html += smoothStroke(penStrokes[2], 22);
    html += smoothStroke(penStrokes[3], 22);
    document.getElementById('klineChart').innerHTML = html;
}

function toPage(points) {
    return points.map(([x, y]) => [+(x / 1.3067).toFixed(1), +(1880 + y / 3).toFixed(1)]);
}

function renderKdj() {
    let html = '';
    html += line(toPage(kdjJ), '#6a80c4', 2.5);
    html += line(toPage(kdjD), '#a89060', 2.5);
    html += line(toPage(kdjK), '#b03f3c', 2.6);
    html += '<text class="axis-label" x="28" y="2005">113.361</text>';
    html += '<text class="axis-label" x="28" y="2224">-14.475</text>';
    document.getElementById('kdjChart').innerHTML = html;
}

renderKline();
renderKdj();
```
